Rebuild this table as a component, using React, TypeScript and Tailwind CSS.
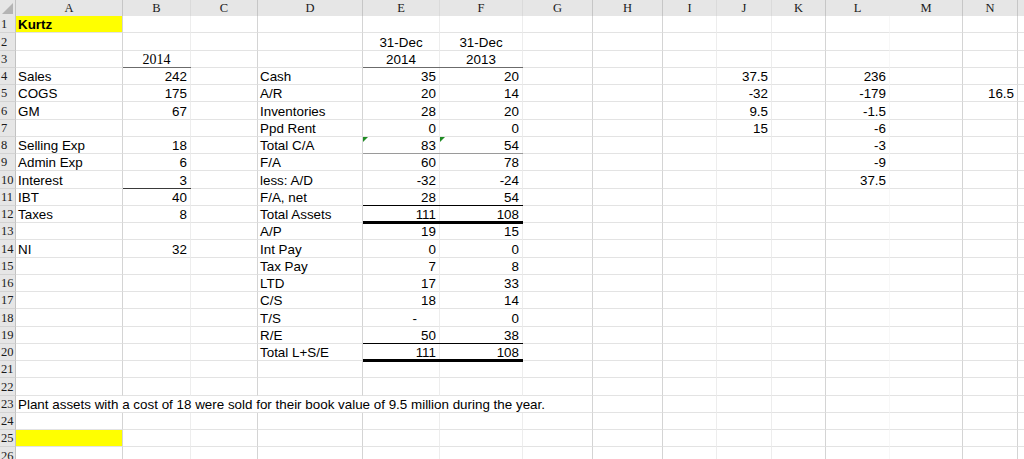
type Col = 'A' | 'B' | 'C' | 'D' | 'E' | 'F' | 'G' | 'H' | 'I' | 'J' | 'K' | 'L' | 'M' | 'N' | 'O'
type Line = 'dark' | 'faint' | 'none'
type Edge = 'mid' | 'gray' | 'dark' | 'black' | 'thick'

type CellDef = {
  v?: string
  align?: 'l' | 'r' | 'c'
  bold?: boolean
  serif?: boolean
  edge?: Edge
  yellow?: boolean
  flag?: boolean
  dash?: boolean
}

const GRID = "grid grid-cols-[16px_107px_68px_67px_105px_77px_83px_70px_70px_54px_55px_54px_64px_73px_55px_60px]"

const cols: { id: Col; line: Line; label: string }[] = [
  { id: 'A', line: 'dark', label: 'A' },
  { id: 'B', line: 'faint', label: 'B' },
  { id: 'C', line: 'dark', label: 'C' },
  { id: 'D', line: 'dark', label: 'D' },
  { id: 'E', line: 'faint', label: 'E' },
  { id: 'F', line: 'faint', label: 'F' },
  { id: 'G', line: 'dark', label: 'G' },
  { id: 'H', line: 'dark', label: 'H' },
  { id: 'I', line: 'faint', label: 'I' },
  { id: 'J', line: 'faint', label: 'J' },
  { id: 'K', line: 'dark', label: 'K' },
  { id: 'L', line: 'none', label: 'L' },
  { id: 'M', line: 'dark', label: 'M' },
  { id: 'N', line: 'dark', label: 'N' },
  { id: 'O', line: 'none', label: '' },
]

const bodyLine: Record<Line, string> = {
  dark: "border-r-[#d4d4d4]",
  faint: "border-r-[#ededed]",
  none: "border-r-[#f7f7f7]",
}

const headLine: Record<Line, string> = {
  dark: "border-r-[#c6c6c6]",
  faint: "border-r-[#dadada]",
  none: "border-r-[#e6e6e6]",
}

// cell underlines, drawn over the gridline so they run across column edges
const edgeCls: Record<Edge, string> = {
  mid: "-bottom-px h-px bg-[#6b6b6b]",
  gray: "-bottom-px h-px bg-[#9a9a9a]",
  dark: "-bottom-px h-px bg-[#3a3a3a]",
  black: "-bottom-px h-px bg-black",
  thick: "-bottom-[2px] h-[3px] bg-black",
}

const income: [number, string, string][] = [
  [4, "Sales", "242"],
  [5, "COGS", "175"],
  [6, "GM", "67"],
  [8, "Selling Exp", "18"],
  [9, "Admin Exp", "6"],
  [10, "Interest", "3"],
  [11, "IBT", "40"],
  [12, "Taxes", "8"],
  [14, "NI", "32"],
]

// balance sheet: label, 2014, 2013 (starts at row 4)
const balance: [string, string, string][] = [
  ["Cash", "35", "20"],
  ["A/R", "20", "14"],
  ["Inventories", "28", "20"],
  ["Ppd Rent", "0", "0"],
  ["Total C/A", "83", "54"],
  ["F/A", "60", "78"],
  ["less: A/D", "-32", "-24"],
  ["F/A, net", "28", "54"],
  ["Total Assets", "111", "108"],
  ["A/P", "19", "15"],
  ["Int Pay", "0", "0"],
  ["Tax Pay", "7", "8"],
  ["LTD", "17", "33"],
  ["C/S", "18", "14"],
  ["T/S", "-", "0"],
  ["R/E", "50", "38"],
  ["Total L+S/E", "111", "108"],
]

const balanceEdges: Record<number, Edge> = { 8: 'gray', 11: 'black', 12: 'thick', 19: 'black', 20: 'thick' }

const sheet: Record<number, Partial<Record<Col, CellDef>>> = {}
const put = (r: number, c: Col, d: CellDef) => {
  sheet[r] = sheet[r] ?? {}
  sheet[r][c] = { ...(sheet[r][c] ?? {}), ...d }
}

put(1, 'A', { v: "Kurtz", bold: true, yellow: true })
put(2, 'E', { v: "31-Dec", align: 'c' })
put(2, 'F', { v: "31-Dec", align: 'c' })
put(3, 'B', { v: "2014", align: 'c', serif: true, edge: 'mid' })
put(3, 'E', { v: "2014", align: 'c', edge: 'mid' })
put(3, 'F', { v: "2013", align: 'c', edge: 'mid' })
income.forEach(([r, label, val]) => {
  put(r, 'A', { v: label })
  put(r, 'B', { v: val, align: 'r' })
})
put(10, 'B', { edge: 'dark' })
balance.forEach(([label, a, b], i) => {
  const r = i + 4
  const edge = balanceEdges[r]
  put(r, 'D', { v: label })
  put(r, 'E', { v: a, align: 'r', edge, dash: a === "-" })
  put(r, 'F', { v: b, align: 'r', edge })
})
put(8, 'E', { flag: true })
put(8, 'F', { flag: true })
;["37.5", "-32", "9.5", "15"].forEach((v, i) => put(i + 4, 'J', { v, align: 'r' }))
;["236", "-179", "-1.5", "-6", "-3", "-9", "37.5"].forEach((v, i) => put(i + 4, 'L', { v, align: 'r' }))
put(5, 'N', { v: "16.5", align: 'r' })
put(25, 'A', { yellow: true })

const NOTE = "Plant assets with a cost of 18 were sold for their book value of 9.5 million during the year."
const NOTE_ROW = 23
const NOTE_SPAN: Col[] = ['A', 'B', 'C', 'D', 'E', 'F', 'G']

function Cell({ col, def }: { col: { id: Col; line: Line }; def?: CellDef }) {
  const d = def ?? {}
  const align = d.align === 'r' ? "justify-end pr-[3px]" : d.align === 'c' ? "justify-center" : "justify-start pl-[2px]"
  return (
    <div
      className={`relative flex min-h-0 items-center whitespace-nowrap border-b border-r border-b-[#e3e3e3] pt-px leading-[15px] ${bodyLine[col.line]} ${align} ${d.yellow ? "bg-[#ffff00]" : ""} ${d.bold ? "font-bold" : ""} ${d.serif ? "font-['Liberation_Serif',serif] text-[14px]" : ""}`}
    >
      {d.flag && (
        <svg className="absolute left-0 top-0" width="5" height="5" viewBox="0 0 5 5">
          <polygon points="0,0 5,0 0,5" fill="#1f8b24" />
        </svg>
      )}
      {d.v && <span className={d.dash ? "pr-[19px]" : ""}>{d.v}</span>}
      {d.edge && <div className={`absolute left-0 -right-px z-10 ${edgeCls[d.edge]}`} />}
    </div>
  )
}

function Row({ r }: { r: number }) {
  const h = r % 4 === 2 ? "h-[18px]" : "h-[17px]"
  const row = sheet[r] ?? {}
  const isNote = r === NOTE_ROW
  return (
    <div className={`${GRID} ${h}`}>
      <div className="flex min-h-0 items-center border-b border-r border-b-[#d3d3d3] border-r-[#c2c2c2] bg-[#e6e6e6] pl-[1px] pt-px font-['Liberation_Serif',serif] text-[12.5px] leading-[15px] text-[#1a1a1a]">
        {r}
      </div>
      {isNote && (
        <div className="col-span-7 flex min-h-0 items-center whitespace-nowrap border-b border-r border-b-[#e3e3e3] border-r-[#d4d4d4] pl-[2px] pt-px leading-[15px]">
          {NOTE}
        </div>
      )}
      {cols
        .filter(c => !(isNote && NOTE_SPAN.includes(c.id)))
        .map(c => (
          <Cell key={c.id} col={c} def={row[c.id]} />
        ))}
    </div>
  )
}

export default function App() {
  const rows = Array.from({ length: 26 }, (_, i) => i + 1)
  return (
    <div className="h-[459px] w-[1024px] overflow-hidden bg-white font-['Liberation_Sans',Arial,sans-serif] text-[13.4px] text-black">
      <div className={`${GRID} h-[16px] bg-[#e6e6e6] font-['Liberation_Serif',serif] text-[12.5px] leading-[15px] text-[#1a1a1a]`}>
        <div className="flex items-end justify-end border-r border-r-[#c2c2c2] pb-[2px] pr-[2px]">
          <svg width="11" height="11" viewBox="0 0 11 11">
            <polygon points="11,0 11,11 0,11" fill="#b4b4b4" />
          </svg>
        </div>
        {cols.map(c => (
          <div key={c.id} className={`flex items-center justify-center border-r ${headLine[c.line]}`}>
            {c.label}
          </div>
        ))}
      </div>
      {rows.map(r => (
        <Row key={r} r={r} />
      ))}
    </div>
  )
}
